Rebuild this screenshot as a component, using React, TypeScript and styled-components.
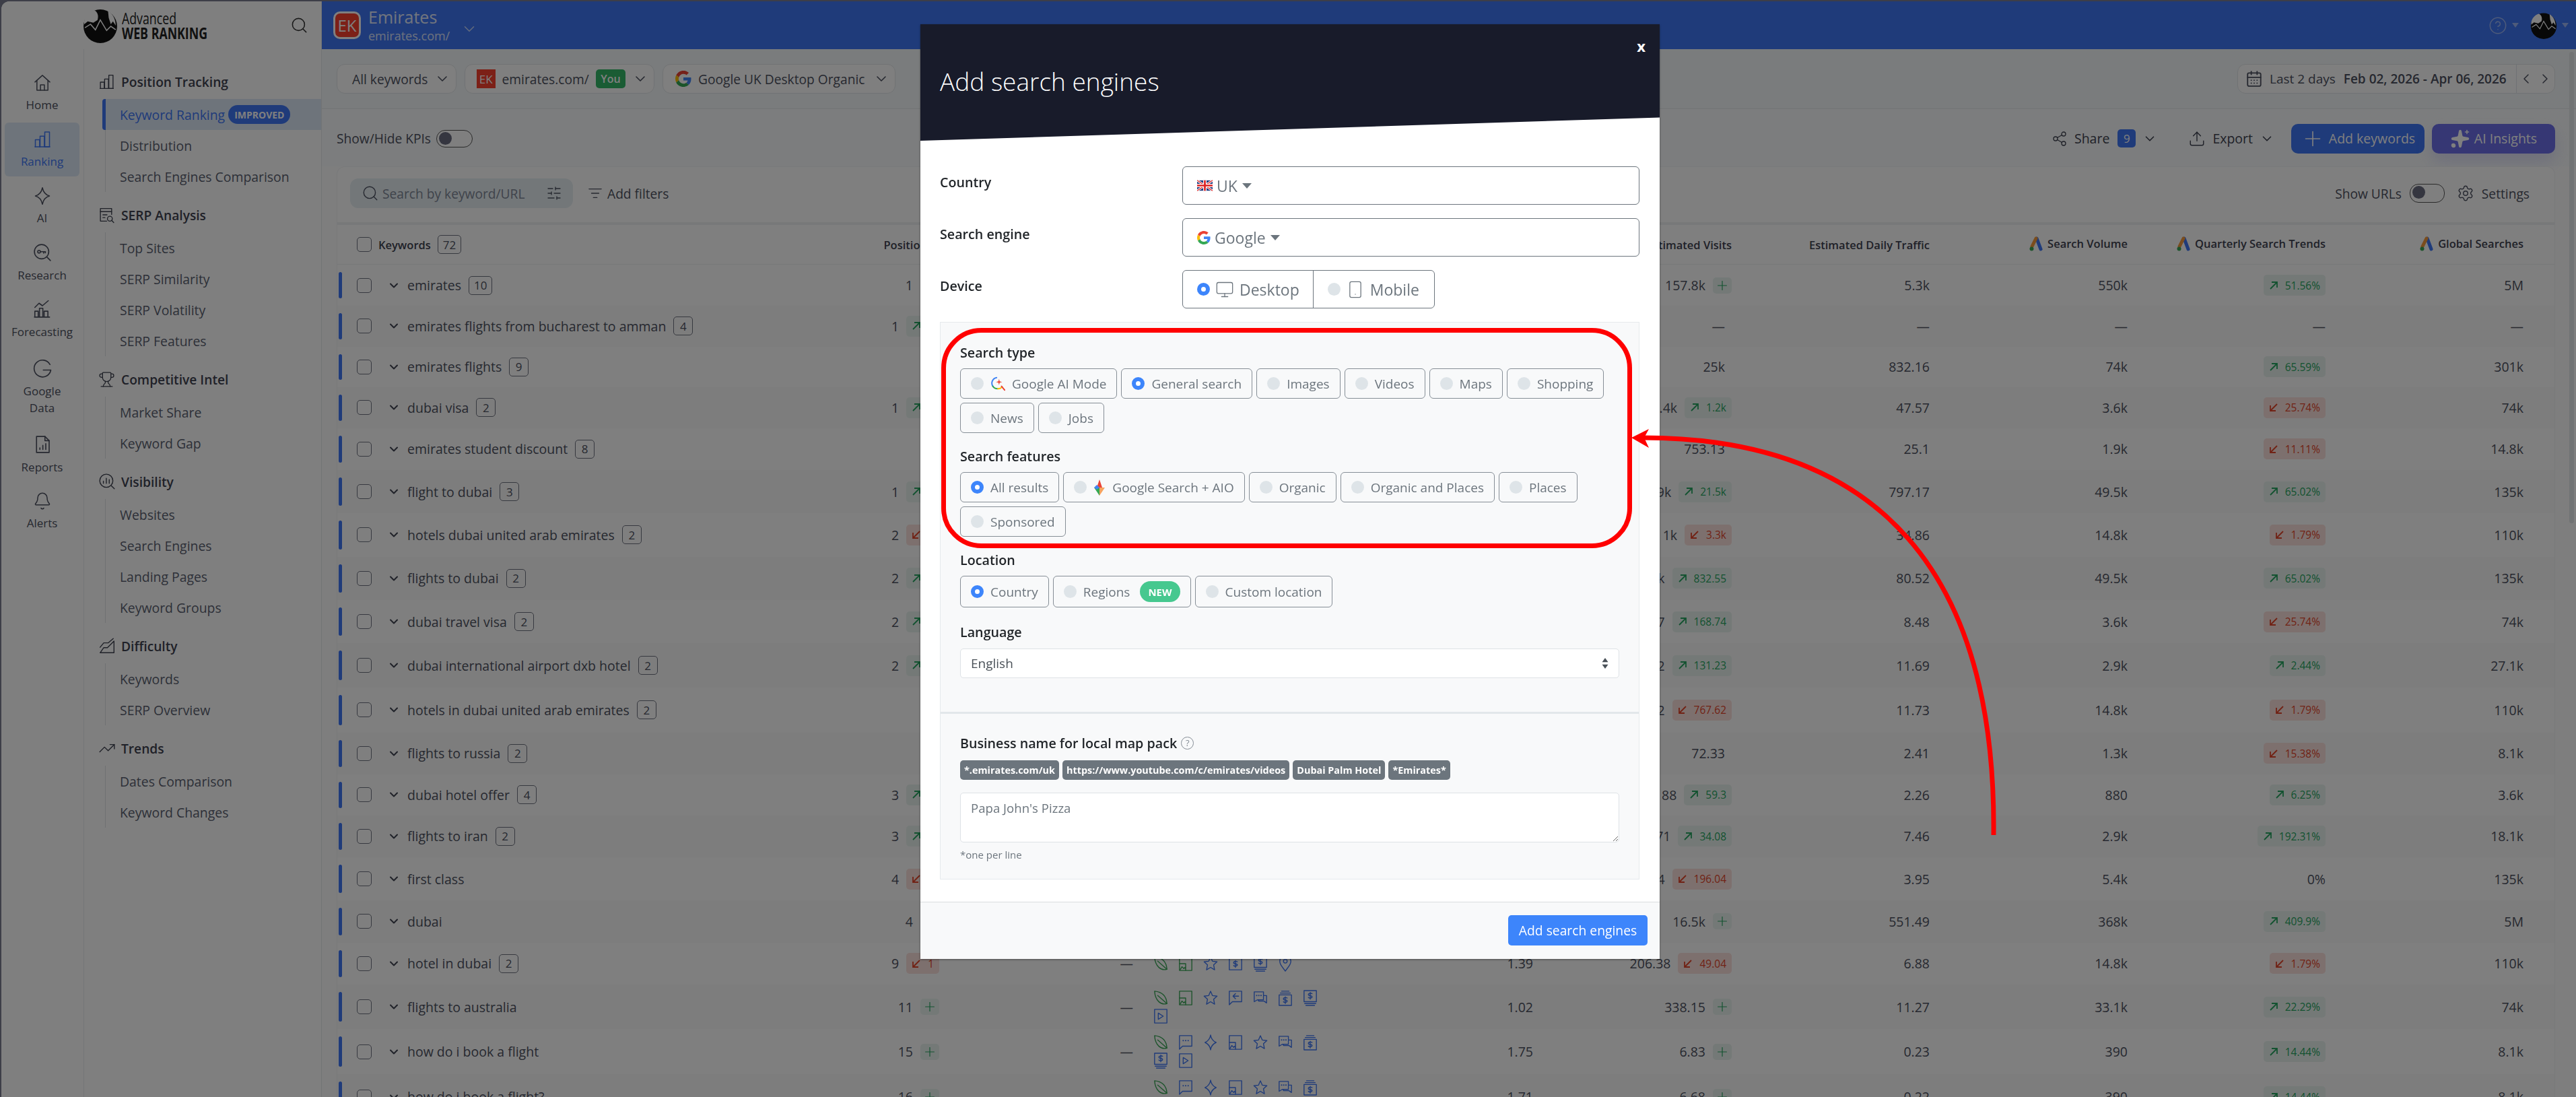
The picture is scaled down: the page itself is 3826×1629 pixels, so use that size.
import type { ReactNode } from 'react'
import styled, { createGlobalStyle } from 'styled-components'
import {
  Bell,
  CalendarDays,
  ChevronDown,
  ChevronLeft,
  ChevronRight,
  CircleHelp,
  ListFilter,
  Monitor,
  Plus,
  Search,
  Settings,
  Share2,
  SlidersHorizontal,
  Smartphone,
  Sparkles,
  TrendingUp,
  Trophy,
  Upload,
} from 'lucide-react'

const GlobalStyle = createGlobalStyle`
  html, body {
    margin: 0;
    padding: 0;
    width: 3826px;
    height: 1629px;
    overflow: hidden;
    background: #7a7d90;
  }
  * {
    box-sizing: border-box;
  }
  body {
    font-family: "Open Sans", "Noto Sans", sans-serif;
    color: #5a5f70;
  }
`

function GoogleG({ size = 24 }: { size?: number }) {
  return (
    <svg width={size} height={size} viewBox="0 0 48 48">
      <path fill="#EA4335" d="M24 9.5c3.5 0 6.7 1.2 9.2 3.6l6.9-6.9C35.9 2.4 30.5 0 24 0 14.6 0 6.5 5.4 2.6 13.2l8 6.2C12.500 13.600 17.800 9.500 24 9.500z" />
      <path fill="#4285F4" d="M47 24.500c0-1.600-.1-3.100-.4-4.500H24v9h12.900c-.6 3-2.200 5.500-4.700 7.200l7.700 6c4.500-4.200 7.100-10.300 7.100-17.700z" />
      <path fill="#FBBC05" d="M10.600 28.600c-.5-1.400-.8-3-.8-4.600s.3-3.200.8-4.600l-8-6.200C1 16.500 0 20.100 0 24s1 7.500 2.600 10.800l8-6.200z" />
      <path fill="#34A853" d="M24 48c6.500 0 11.900-2.100 15.900-5.800l-7.700-6c-2.200 1.500-5 2.300-8.200 2.300-6.200 0-11.500-4.100-13.400-9.900l-8 6.200C6.500 42.600 14.600 48 24 48z" />
    </svg>
  )
}

function AdsIcon() {
  return (
    <AdsSvg viewBox="0 0 20 22">
      <path d="M11 3l6 16" stroke="#3e76f4" strokeWidth="5" strokeLinecap="round" />
      <path d="M10 3L4 15" stroke="#f59a3c" strokeWidth="5" strokeLinecap="round" />
      <circle cx="3.500" cy="18.500" r="3" fill="#3aa757" />
    </AdsSvg>
  )
}

function Glyph({ size = 26, children }: { size?: number; children: ReactNode }) {
  return (
    <svg width={size} height={size} viewBox="0 0 24 24" fill="none" stroke="currentColor" strokeWidth="1.300" strokeLinecap="round" strokeLinejoin="round">
      {children}
    </svg>
  )
}

const HomeIcon = () => (
  <Glyph size={28}>
    <path d="M2.500 11L12 2.500 21.500 11" />
    <path d="M5 9v12.500h14V9" />
    <path d="M9.500 21.500v-7h5v7" />
  </Glyph>
)
const BarsIcon = ({ size = 28 }: { size?: number }) => (
  <Glyph size={size}>
    <path d="M3 21.500v-9h5.500v9" />
    <path d="M9 21.500V8h5.500v13.500" />
    <path d="M15 21.500V2.500h6v19z" />
    <path d="M2.500 21.500h19" />
  </Glyph>
)
const SparkIcon = ({ size = 28 }: { size?: number }) => (
  <Glyph size={size}>
    <path d="M12 1.500c1.200 6 4.500 9.300 9 10.500-4.500 1.200-7.800 4.500-9 10.500-1.200-6-4.500-9.300-9-10.500 4.500-1.200 7.800-4.500 9-10.500z" />
  </Glyph>
)
const ResearchIcon = () => (
  <Glyph size={30}>
    <circle cx="11" cy="11" r="8.500" />
    <circle cx="8" cy="11" r="1.600" />
    <path d="M9.600 11h6M13.500 11v1.800M15.500 11v1.300M17.500 17.500l4 4" />
  </Glyph>
)
const ForecastIcon = () => (
  <Glyph size={30}>
    <path d="M3 21.500v-7h4v7M8.500 21.500V11h4v10.500M14 21.500v-7h4.500v7M2.500 21.500h18" />
    <path d="M3 10l5-5 4 3 7-6" />
  </Glyph>
)
const GLetterIcon = () => (
  <Glyph size={30}>
    <path d="M21 7.500A10 10 0 1 0 22 14h-9" />
  </Glyph>
)
const ReportIcon = () => (
  <Glyph size={30}>
    <path d="M5 2.500h10l5 5v14H5z" />
    <path d="M15 2.500v5h5M9 18v-2M12.500 18v-5M16 18v-7" />
  </Glyph>
)
const SerpIcon = () => (
  <Glyph size={25}>
    <path d="M19 11V2.500H3v18h9" />
    <path d="M3 7h16M6.500 11.500h6M6.500 15.500h3" />
    <circle cx="16.500" cy="17" r="3.500" />
    <path d="M19 19.500l3 3" />
  </Glyph>
)
const VisibilityIcon = () => (
  <Glyph size={26}>
    <circle cx="11" cy="11" r="9" />
    <path d="M7 14.500v-3M11 14.500v-7M15 14.500v-5M18 18l4 4" />
  </Glyph>
)
const DifficultyIcon = () => (
  <Glyph size={26}>
    <path d="M21.500 5.500v16h-19l5-7h5z" />
    <path d="M2.500 14l5-6 6 0 7-6" />
  </Glyph>
)

function LogoGlobe({ size }: { size: number }) {
  return (
    <svg width={size} height={size} viewBox="0 0 50 50">
      <circle cx="25" cy="26" r="24" fill="#111" />
      <path d="M16 3c5 2 7 8 5 14l-6 4-8-2-5 4C1 15 6 6 16 3z" fill="#fff" />
      <path d="M36 4c7 4 11 12 11 21l-4-6-3 4-3-9z" fill="#fff" />
      <path d="M3 28l8-5 7 8 7-14 9 15 6-6 7 5" stroke="#fff" strokeWidth="1.500" fill="none" />
    </svg>
  )
}

function UkFlag() {
  return (
    <svg width="23" height="17" viewBox="0 0 60 40">
      <rect width="60" height="40" fill="#1f3a7d" />
      <path d="M0 0l60 40M60 0L0 40" stroke="#fff" strokeWidth="8" />
      <path d="M0 0l60 40M60 0L0 40" stroke="#d22" strokeWidth="3" />
      <path d="M30 0v40M0 20h60" stroke="#fff" strokeWidth="13" />
      <path d="M30 0v40M0 20h60" stroke="#d22" strokeWidth="7" />
    </svg>
  )
}

function AiModeIcon() {
  return (
    <svg width="22" height="26" viewBox="0 0 24 26" fill="none" strokeWidth="2.200" strokeLinecap="round">
      <path d="M10 3a9 9 0 0 0-6 14" stroke="#4285f4" />
      <path d="M4 17a9 9 0 0 0 8 4" stroke="#34a853" />
      <path d="M12 21a9 9 0 0 0 7-3" stroke="#fbbc05" />
      <path d="M18 17l5 6" stroke="#ea4335" />
      <path d="M14 5l1 4 4 1-4 1-1 4-1-4-4-1 4-1z" fill="#ea4335" stroke="none" />
    </svg>
  )
}

function AioIcon() {
  return (
    <svg width="18" height="26" viewBox="0 0 18 26">
      <path d="M9 1l4 12H5z" fill="#ea4335" />
      <path d="M17 13L9 25l-2-12z" fill="#f4a460" />
      <path d="M1 13l8 12V13z" fill="#34a853" />
      <path d="M5 9l4 4-4 3-4-3z" fill="#4285f4" />
    </svg>
  )
}

type FeatureName = 'leaf' | 'image' | 'imageBlue' | 'star' | 'dollar' | 'monitor' | 'pin' | 'reply' | 'chat' | 'stack' | 'play' | 'bubble' | 'spark'

function FeatureIcon({ name }: { name: FeatureName }) {
  const green = name === 'leaf' || name === 'image'
  return (
    <FeatureSvg $green={green} viewBox="0 0 24 26" fill="none" stroke="currentColor" strokeWidth="1.500" strokeLinejoin="round" strokeLinecap="round">
      {name === 'leaf' && (
        <>
          <path d="M2 2c11 1 19 6 20 20-9 3-19-4-20-20z" />
          <path d="M7 9c5 4 10 9 15 13" />
        </>
      )}
      {(name === 'image' || name === 'imageBlue') && (
        <>
          <rect x="2" y="2" width="20" height="22" />
          <path d="M2 13h10v11M3 23l3-5 3 3 2-2 1 3" />
        </>
      )}
      {name === 'star' && <path d="M12 2l3 7 7.500 1-5.500 5 1.500 8-6.500-4-6.500 4L7 15 1.500 10 9 9z" />}
      {name === 'dollar' && (
        <>
          <rect x="2" y="4" width="20" height="19" />
          <path d="M12 8v11M15 10c-1-1-6-1-6 1.500s6 1 6 3.500-5 2.500-6 1" />
        </>
      )}
      {name === 'monitor' && (
        <>
          <rect x="2" y="1" width="20" height="18" />
          <path d="M12 4v11M15 6c-1-1-6-1-6 1.500s6 1 6 3.500-5 2.500-6 1M3 22h18M5 25h14" />
        </>
      )}
      {name === 'stack' && (
        <>
          <rect x="2" y="8" width="20" height="17" />
          <path d="M12 11v11M15 13c-1-1-6-1-6 1.500s6 1 6 3.500-5 2.500-6 1M4 5h16M6 2h12" />
        </>
      )}
      {name === 'pin' && (
        <>
          <path d="M12 25C5 16 3 13 3 9a9 9 0 0 1 18 0c0 4-2 7-9 16z" />
          <circle cx="12" cy="9" r="3" />
        </>
      )}
      {name === 'reply' && (
        <>
          <path d="M2 2h20v17H7l-5 5z" />
          <path d="M17 10H9M12 6l-4 4 4 4" />
        </>
      )}
      {name === 'chat' && (
        <>
          <path d="M2 3h15v13H7l-5 3z" />
          <path d="M17 9h5v12l-4-3H9v-2" />
          <path d="M6 9h.1M9.500 9h.1M13 9h.1" strokeWidth="2.200" />
        </>
      )}
      {name === 'bubble' && (
        <>
          <path d="M2 2h20v17H7l-5 5z" />
          <path d="M8 10h.1M12 10h.1M16 10h.1" strokeWidth="2.200" />
        </>
      )}
      {name === 'play' && (
        <>
          <rect x="2" y="2" width="20" height="22" />
          <path d="M8 8l8 5-8 5z" />
        </>
      )}
      {name === 'spark' && <path d="M12 1c1 7 4.500 10 9 12-4.500 2-8 5-9 12-1-7-4.500-10-9-12 4.500-2 8-5 9-12z" />}
    </FeatureSvg>
  )
}

const railItems = [
  { label: 'Home', icon: <HomeIcon /> },
  { label: 'Ranking', icon: <BarsIcon />, active: true },
  { label: 'AI', icon: <SparkIcon /> },
  { label: 'Research', icon: <ResearchIcon /> },
  { label: 'Forecasting', icon: <ForecastIcon /> },
  { label: 'Google Data', icon: <GLetterIcon />, tall: true },
  { label: 'Reports', icon: <ReportIcon /> },
  { label: 'Alerts', icon: <Bell size={28} strokeWidth={1.300} /> },
]

const navGroups = [
  { title: 'Position Tracking', icon: <BarsIcon size={25} />, items: ['Keyword Ranking', 'Distribution', 'Search Engines Comparison'] },
  { title: 'SERP Analysis', icon: <SerpIcon />, items: ['Top Sites', 'SERP Similarity', 'SERP Volatility', 'SERP Features'] },
  { title: 'Competitive Intel', icon: <Trophy size={25} strokeWidth={1.300} />, items: ['Market Share', 'Keyword Gap'] },
  { title: 'Visibility', icon: <VisibilityIcon />, items: ['Websites', 'Search Engines', 'Landing Pages', 'Keyword Groups'] },
  { title: 'Difficulty', icon: <DifficultyIcon />, items: ['Keywords', 'SERP Overview'] },
  { title: 'Trends', icon: <TrendingUp size={26} strokeWidth={1.300} />, items: ['Dates Comparison', 'Keyword Changes'] },
]

type Delta = { dir: 'up' | 'down' | 'new'; text?: string } | null

type KeywordRow = {
  h: number
  name: string
  count?: number
  pos?: string
  posDelta?: Delta
  features?: FeatureName[]
  cpc?: string
  visits: string
  visitsDelta?: Delta
  traffic: string
  volume: string
  trend: Delta | string
  global: string
}

const up = (text?: string): Delta => ({ dir: 'up', text })
const down = (text?: string): Delta => ({ dir: 'down', text })
const added: Delta = { dir: 'new' }

const rows: KeywordRow[] = [
  { h: 61, name: 'emirates', count: 10, pos: '1', posDelta: added, visits: '157.8k', visitsDelta: added, traffic: '5.3k', volume: '550k', trend: up('51.56%'), global: '5M' },
  { h: 60.5, name: 'emirates flights from bucharest to amman', count: 4, pos: '1', posDelta: up('1'), visits: '—', traffic: '—', volume: '—', trend: '—', global: '—' },
  { h: 60.5, name: 'emirates flights', count: 9, visits: '25k', traffic: '832.16', volume: '74k', trend: up('65.59%'), global: '301k' },
  { h: 60.5, name: 'dubai visa', count: 2, pos: '1', posDelta: up('1'), visits: '2.4k', visitsDelta: up('1.2k'), traffic: '47.57', volume: '3.6k', trend: down('25.74%'), global: '74k' },
  { h: 62.5, name: 'emirates student discount', count: 8, visits: '753.13', traffic: '25.1', volume: '1.9k', trend: down('11.11%'), global: '14.8k' },
  { h: 64, name: 'flight to dubai', count: 3, pos: '1', posDelta: up('1'), visits: '29k', visitsDelta: up('21.5k'), traffic: '797.17', volume: '49.5k', trend: up('65.02%'), global: '135k' },
  { h: 64.5, name: 'hotels dubai united arab emirates', count: 2, pos: '2', posDelta: down('1'), visits: '1k', visitsDelta: down('3.3k'), traffic: '34.86', volume: '14.8k', trend: down('1.79%'), global: '110k' },
  { h: 64.5, name: 'flights to dubai', count: 2, pos: '2', posDelta: up('1'), visits: '1.2k', visitsDelta: up('832.55'), traffic: '80.52', volume: '49.5k', trend: up('65.02%'), global: '135k' },
  { h: 64, name: 'dubai travel visa', count: 2, pos: '2', posDelta: up('1'), visits: '217', visitsDelta: up('168.74'), traffic: '8.48', volume: '3.6k', trend: down('25.74%'), global: '74k' },
  { h: 66, name: 'dubai international airport dxb hotel', count: 2, pos: '2', posDelta: up('1'), visits: '292', visitsDelta: up('131.23'), traffic: '11.69', volume: '2.9k', trend: up('2.44%'), global: '27.1k' },
  { h: 66.5, name: 'hotels in dubai united arab emirates', count: 2, visits: '292', visitsDelta: down('767.62'), traffic: '11.73', volume: '14.8k', trend: down('1.79%'), global: '110k' },
  { h: 62.5, name: 'flights to russia', count: 2, visits: '72.33', traffic: '2.41', volume: '1.3k', trend: down('15.38%'), global: '8.1k' },
  { h: 60.5, name: 'dubai hotel offer', count: 4, pos: '3', posDelta: up('1'), visits: '88', visitsDelta: up('59.3'), traffic: '2.26', volume: '880', trend: up('6.25%'), global: '3.6k' },
  { h: 62.5, name: 'flights to iran', count: 2, pos: '3', posDelta: up('1'), visits: '171', visitsDelta: up('34.08'), traffic: '7.46', volume: '2.9k', trend: up('192.31%'), global: '18.1k' },
  { h: 64, name: 'first class', pos: '4', posDelta: down('1'), visits: '94', visitsDelta: down('196.04'), traffic: '3.95', volume: '5.4k', trend: '0%', global: '135k' },
  { h: 62.5, name: 'dubai', pos: '4', posDelta: added, visits: '16.5k', visitsDelta: added, traffic: '551.49', volume: '368k', trend: up('409.9%'), global: '5M' },
  { h: 62.5, name: 'hotel in dubai', count: 2, pos: '9', posDelta: down('1'), features: ['leaf', 'image', 'star', 'dollar', 'monitor', 'pin'], cpc: '1.39', visits: '206.38', visitsDelta: down('49.04'), traffic: '6.88', volume: '14.8k', trend: down('1.79%'), global: '110k' },
  { h: 66, name: 'flights to australia', pos: '11', posDelta: added, features: ['leaf', 'image', 'star', 'reply', 'chat', 'stack', 'monitor', 'play'], cpc: '1.02', visits: '338.15', visitsDelta: added, traffic: '11.27', volume: '33.1k', trend: up('22.29%'), global: '74k' },
  { h: 67, name: 'how do i book a flight', pos: '15', posDelta: added, features: ['leaf', 'bubble', 'spark', 'imageBlue', 'star', 'chat', 'stack', 'monitor', 'play'], cpc: '1.75', visits: '6.83', visitsDelta: added, traffic: '0.23', volume: '390', trend: up('14.44%'), global: '8.1k' },
  { h: 67, name: 'how do i book a flight?', pos: '16', posDelta: added, features: ['leaf', 'bubble', 'spark', 'imageBlue', 'star', 'chat', 'stack', 'monitor', 'play'], cpc: '1.71', visits: '6.68', visitsDelta: added, traffic: '0.22', volume: '390', trend: up('14.44%'), global: '8.1k' },
]

function DeltaBadge({ delta }: { delta: NonNullable<Delta> }) {
  if (delta.dir === 'new') {
    return (
      <PlusBadge>
        <Plus size={22} strokeWidth={1.300} />
      </PlusBadge>
    )
  }
  return (
    <Badge $down={delta.dir === 'down'}>
      <svg width="14" height="14" viewBox="0 0 14 14" fill="none" stroke="currentColor" strokeWidth="1.800">
        {delta.dir === 'up' ? <path d="M2 12L12 2M4 2h8v8" /> : <path d="M12 2L2 12M2 4v8h8" />}
      </svg>
      {delta.text}
    </Badge>
  )
}

function Chip({ label, selected, icon, children }: { label: string; selected?: boolean; icon?: ReactNode; children?: ReactNode }) {
  return (
    <ChipBox>
      <Radio $on={selected} />
      {icon}
      <span>{label}</span>
      {children}
    </ChipBox>
  )
}

export default function App() {
  return (
    <>
      <GlobalStyle />
      <Shell>
        <Sidebar>
          <LogoBar>
            <LogoGlobe size={52} />
            <LogoText>
              <LogoTop>Advanced</LogoTop>
              <LogoBottom>WEB RANKING</LogoBottom>
            </LogoText>
            <LogoSearch>
              <Search size={27} strokeWidth={1.400} />
            </LogoSearch>
          </LogoBar>
          <SideBody>
            <Rail>
              {railItems.map((item) => (
                <RailItem key={item.label} $active={item.active} $tall={item.tall}>
                  {item.icon}
                  <RailLabel>{item.label}</RailLabel>
                </RailItem>
              ))}
            </Rail>
            <NavPanel>
              {navGroups.map((group) => (
                <NavGroup key={group.title}>
                  <NavHeading>
                    <NavIcon>{group.icon}</NavIcon>
                    {group.title}
                  </NavHeading>
                  <NavList>
                    {group.items.map((item) =>
                      item === 'Keyword Ranking' ? (
                        <NavItem key={item} $active>
                          {item}
                          <Improved>IMPROVED</Improved>
                        </NavItem>
                      ) : (
                        <NavItem key={item}>{item}</NavItem>
                      ),
                    )}
                  </NavList>
                </NavGroup>
              ))}
            </NavPanel>
          </SideBody>
        </Sidebar>

        <Main>
          <TopBar>
            <EkLogo>EK</EkLogo>
            <Project>
              <ProjectName>Emirates</ProjectName>
              <ProjectUrl>emirates.com/</ProjectUrl>
            </Project>
            <ProjectChevron>
              <ChevronDown size={26} strokeWidth={1.400} />
            </ProjectChevron>
            <TopRight>
              <CircleHelp size={28} strokeWidth={1.300} />
              <Caret />
              <Avatar>
                <LogoGlobe size={40} />
              </Avatar>
              <Caret />
            </TopRight>
          </TopBar>

          <Toolbar>
            <Pill $w={178}>
              All keywords
              <PillChevron>
                <ChevronDown size={24} strokeWidth={1.600} />
              </PillChevron>
            </Pill>
            <Pill $w={282} $inset={17}>
              <EkSquare>EK</EkSquare>
              emirates.com/
              <YouTag>You</YouTag>
              <PillChevron>
                <ChevronDown size={24} strokeWidth={1.600} />
              </PillChevron>
            </Pill>
            <Pill $w={346} $inset={18}>
              <GoogleG size={24} />
              Google UK Desktop Organic
              <PillChevron>
                <ChevronDown size={24} strokeWidth={1.600} />
              </PillChevron>
            </Pill>
            <DatePicker>
              <CalendarDays size={26} strokeWidth={1.700} />
              <DateLabel>Last 2 days</DateLabel>
              <DateRange>Feb 02, 2026 - Apr 06, 2026</DateRange>
              <DateArrows>
                <ChevronLeft size={24} strokeWidth={1.500} />
                <ChevronRight size={24} strokeWidth={1.500} />
              </DateArrows>
            </DatePicker>
          </Toolbar>

          <KpiRow>
            <ToggleLabel>Show/Hide KPIs</ToggleLabel>
            <Toggle />
            <KpiActions>
              <ActionLink $gap={46}>
                <Share2 size={24} strokeWidth={1.300} />
                Share
                <ShareCount>9</ShareCount>
                <ChevronDown size={22} strokeWidth={1.800} />
              </ActionLink>
              <ActionLink $gap={25}>
                <Upload size={26} strokeWidth={1.300} />
                Export
                <ChevronDown size={22} strokeWidth={1.800} />
              </ActionLink>
              <BlueButton>
                <Plus size={36} strokeWidth={1.100} />
                Add keywords
              </BlueButton>
              <PurpleButton>
                <Sparkles size={30} strokeWidth={1.200} fill="currentColor" />
                AI Insights
              </PurpleButton>
            </KpiActions>
          </KpiRow>

          <Card>
            <FilterRow>
              <SearchBox>
                <Search size={26} strokeWidth={1.300} />
                <SearchHint>Search by keyword/URL</SearchHint>
                <SlidersHorizontal size={24} strokeWidth={1.300} />
              </SearchBox>
              <AddFilters>
                <ListFilter size={22} strokeWidth={1.400} />
                Add filters
              </AddFilters>
              <FilterRight>
                <ToggleLabel>Show URLs</ToggleLabel>
                <SmallToggle />
                <SettingsLink>
                  <Settings size={26} strokeWidth={1.300} />
                  Settings
                </SettingsLink>
              </FilterRight>
            </FilterRow>

            <HeadRow>
              <HeadKeyword>
                <CheckBox />
                Keywords
                <CountPill>72</CountPill>
              </HeadKeyword>
              <HeadCell $inset={10}>Positions</HeadCell>
              <HeadCell />
              <HeadCell />
              <HeadCell />
              <HeadCell>Estimated Visits</HeadCell>
              <HeadCell>Estimated Daily Traffic</HeadCell>
              <HeadCell $raised>
                <AdsIcon />
                Search Volume
              </HeadCell>
              <HeadCell $raised>
                <AdsIcon />
                Quarterly Search Trends
              </HeadCell>
              <HeadCell $raised>
                <AdsIcon />
                Global Searches
              </HeadCell>
            </HeadRow>

            {rows.map((row) => (
              <Row key={row.name} $h={row.h}>
                <KeywordCell>
                  <Marker />
                  <CheckBox />
                  <RowChevron>
                    <ChevronDown size={20} strokeWidth={2.400} />
                  </RowChevron>
                  <KeywordName>{row.name}</KeywordName>
                  {row.count !== undefined && <CountPill>{row.count}</CountPill>}
                </KeywordCell>
                <ValueCell>
                  {row.pos}
                  {row.posDelta && <DeltaBadge delta={row.posDelta} />}
                </ValueCell>
                <ValueCell>{row.cpc && '—'}</ValueCell>
                <FeatureCell>
                  {row.features?.map((name, i) => (
                    <FeatureIcon key={i} name={name} />
                  ))}
                </FeatureCell>
                <ValueCell>{row.cpc}</ValueCell>
                <ValueCell $inset={!row.visitsDelta}>
                  {row.visits}
                  {row.visitsDelta && <DeltaBadge delta={row.visitsDelta} />}
                </ValueCell>
                <ValueCell>{row.traffic}</ValueCell>
                <ValueCell>{row.volume}</ValueCell>
                <ValueCell>{typeof row.trend === 'string' ? row.trend : row.trend && <DeltaBadge delta={row.trend} />}</ValueCell>
                <ValueCell>{row.global}</ValueCell>
              </Row>
            ))}
          </Card>
          <ScrollThumb />
        </Main>
      </Shell>

      <Overlay>
        <Modal>
          <ModalHead>
            <CloseMark>x</CloseMark>
            <ModalTitle>Add search engines</ModalTitle>
          </ModalHead>
          <ModalBody>
            <FormRow>
              <FormLabel>Country</FormLabel>
              <SelectBox>
                <UkFlag />
                UK
                <DownCaret />
              </SelectBox>
            </FormRow>
            <FormRow>
              <FormLabel>Search engine</FormLabel>
              <SelectBox>
                <GoogleG size={20} />
                Google
                <DownCaret />
              </SelectBox>
            </FormRow>
            <FormRow>
              <FormLabel>Device</FormLabel>
              <Segmented>
                <Segment>
                  <Radio $on />
                  <Monitor size={28} strokeWidth={1.100} />
                  Desktop
                </Segment>
                <Segment>
                  <Radio />
                  <Smartphone size={28} strokeWidth={1.100} />
                  Mobile
                </Segment>
              </Segmented>
            </FormRow>

            <Panel>
              <PanelTop>
                <PanelLabel>Search type</PanelLabel>
                <ChipWrap>
                  <Chip label="Google AI Mode" icon={<AiModeIcon />} />
                  <Chip label="General search" selected />
                  <Chip label="Images" />
                  <Chip label="Videos" />
                  <Chip label="Maps" />
                  <Chip label="Shopping" />
                  <Chip label="News" />
                  <Chip label="Jobs" />
                </ChipWrap>
                <PanelLabel>Search features</PanelLabel>
                <ChipWrap>
                  <Chip label="All results" selected />
                  <Chip label="Google Search + AIO" icon={<AioIcon />} />
                  <Chip label="Organic" />
                  <Chip label="Organic and Places" />
                  <Chip label="Places" />
                  <Chip label="Sponsored" />
                </ChipWrap>
                <PanelLabel>Location</PanelLabel>
                <LocationWrap>
                  <Chip label="Country" selected />
                  <Chip label="Regions">
                    <NewTag>NEW</NewTag>
                  </Chip>
                  <Chip label="Custom location" />
                </LocationWrap>
                <LanguageLabel>Language</LanguageLabel>
                <LanguageSelect>
                  English
                  <UpDown viewBox="0 0 12 20">
                    <path d="M6 1l5 7H1zM6 19l5-7H1z" />
                  </UpDown>
                </LanguageSelect>
              </PanelTop>
              <PanelBottom>
                <BusinessLabel>
                  Business name for local map pack
                  <HelpDot>?</HelpDot>
                </BusinessLabel>
                <TagRow>
                  <Tag>*.emirates.com/uk</Tag>
                  <Tag>https://www.youtube.com/c/emirates/videos</Tag>
                  <Tag>Dubai Palm Hotel</Tag>
                  <Tag>*Emirates*</Tag>
                </TagRow>
                <TextArea readOnly placeholder="Papa John's Pizza" />
                <Hint>*one per line</Hint>
              </PanelBottom>
            </Panel>
          </ModalBody>
          <ModalFoot>
            <SubmitButton>Add search engines</SubmitButton>
          </ModalFoot>
        </Modal>
        <Annotation viewBox="0 0 3826 1629">
          <rect x="1401.500" y="490.500" width="1019" height="320" rx="56" fill="none" stroke="#ff0000" strokeWidth="7" />
          <path d="M2961 1240C2965 850 2790 650 2440 650" fill="none" stroke="#ff0000" strokeWidth="7" />
          <path d="M2423 650L2449 637L2442 650L2449 665z" fill="#ff0000" />
        </Annotation>
      </Overlay>
    </>
  )
}

const GRID = '770px 124px 288px 293px 301px 295px 294px 294px 294px 294px 46px'

const Shell = styled.div`
  position: relative;
  display: flex;
  width: 3824px;
  height: 1627px;
  margin: 2px 0 0 2px;
  background: #fff;
  border-top-left-radius: 12px;
  overflow: hidden;
`

const Sidebar = styled.aside`
  flex: 0 0 476px;
  display: flex;
  flex-direction: column;
  background: #fff;
  border-right: 1px solid #e4e8ea;
`

const LogoBar = styled.div`
  height: 71px;
  display: flex;
  align-items: center;
  padding-left: 121px;
`

const LogoText = styled.div`
  display: flex;
  flex-direction: column;
  margin-left: 6px;
  color: #222;
  transform: scaleX(0.74);
  transform-origin: left center;
`

const LogoTop = styled.span`
  font-size: 24px;
  line-height: 22px;
`

const LogoBottom = styled.span`
  font-size: 24px;
  line-height: 22px;
  font-weight: 700;
  white-space: nowrap;
`

const LogoSearch = styled.div`
  margin-left: auto;
  margin-right: 19px;
  display: flex;
  color: #333;
`

const SideBody = styled.div`
  flex: 1;
  display: flex;
  min-height: 0;
`

const Rail = styled.nav`
  flex: 0 0 123px;
  padding: 25px 6px 0 5px;
  border-right: 1.5px solid #e8ebee;
  display: flex;
  flex-direction: column;
  align-items: stretch;
  gap: 4px;
`

const RailItem = styled.div<{ $active?: boolean; $tall?: boolean }>`
  flex: none;
  height: ${({ $tall }) => ($tall ? '113px' : '80px')};
  display: flex;
  flex-direction: column;
  align-items: center;
  justify-content: center;
  gap: 6px;
  border-radius: 6px;
  color: ${({ $active }) => ($active ? '#3e76f4' : '#4d5160')};
  background: ${({ $active }) => ($active ? '#dde9f7' : 'transparent')};
  text-align: center;
`

const RailLabel = styled.span`
  font-size: 17px;
  line-height: 25px;
  max-width: 92px;
`

const NavPanel = styled.nav`
  flex: 1;
  min-width: 0;
  padding-top: 33px;
`

const NavGroup = styled.section`
  margin-bottom: 19px;
`

const NavHeading = styled.h3`
  margin: 0 0 11px 21px;
  height: 30px;
  display: flex;
  align-items: center;
  font-size: 19.2px;
  font-weight: 600;
  color: #3e4250;
`

const NavIcon = styled.span`
  width: 34px;
  display: flex;
`

const NavList = styled.ul`
  list-style: none;
  margin: 0 0 0 31px;
  padding: 0;
  border-left: 1.5px solid #dfe3e6;
`

const NavItem = styled.li<{ $active?: boolean }>`
  height: 46px;
  display: flex;
  align-items: center;
  padding-left: 21px;
  margin-left: ${({ $active }) => ($active ? '-5px' : '0')};
  font-size: 19.4px;
  color: ${({ $active }) => ($active ? '#3e76f4' : '#5a5f70')};
  background: ${({ $active }) => ($active ? '#dde9f7' : 'transparent')};
  border-left: ${({ $active }) => ($active ? '5px solid #3e76f4' : '0')};
  border-radius: ${({ $active }) => ($active ? '4px 0 0 4px' : '0')};
`

const Improved = styled.span`
  margin-left: 5px;
  height: 28px;
  padding: 0 9px;
  display: flex;
  align-items: center;
  border-radius: 14px;
  background: #3e76f4;
  color: #fff;
  font-size: 14px;
  font-weight: 700;
`

const Main = styled.main`
  position: relative;
  flex: 1;
  min-width: 0;
  display: flex;
  flex-direction: column;
  background: #fdfdfd;
`

const TopBar = styled.header`
  flex: 0 0 71px;
  display: flex;
  align-items: center;
  padding: 0 11px 0 17px;
  background: #3e76f4;
  color: #fff;
`

const EkLogo = styled.div`
  width: 41px;
  height: 41px;
  display: flex;
  align-items: center;
  justify-content: center;
  border: 3px solid #fff;
  border-radius: 10px;
  background: #f8402e;
  font-size: 24px;
`

const Project = styled.div`
  margin-left: 11px;
  display: flex;
  flex-direction: column;
`

const ProjectName = styled.span`
  font-size: 25px;
  line-height: 30px;
  opacity: 0.85;
`

const ProjectUrl = styled.span`
  font-size: 18px;
  line-height: 26px;
  opacity: 0.8;
`

const ProjectChevron = styled.div`
  margin-left: 16px;
  display: flex;
  margin-top: 10px;
  opacity: 0.7;
`

const TopRight = styled.div`
  margin-left: auto;
  display: flex;
  align-items: center;
  gap: 7px;
  color: #9db6f5;
`

const Caret = styled.span`
  width: 0;
  height: 0;
  border-left: 5px solid transparent;
  border-right: 5px solid transparent;
  border-top: 7px solid #9db6f5;
`

const Avatar = styled.div`
  width: 40px;
  height: 40px;
  margin-left: 10px;
  border-radius: 50%;
  overflow: hidden;
  display: flex;
`

const Toolbar = styled.div`
  flex: 0 0 89px;
  display: flex;
  align-items: center;
  gap: 12px;
  padding: 0 31px 0 22px;
  background: #f4f8fa;
  border-bottom: 1.5px solid #e4e8ea;
`

const Pill = styled.div<{ $w: number; $inset?: number }>`
  width: ${({ $w }) => $w}px;
  height: 44px;
  display: flex;
  align-items: center;
  gap: 10px;
  padding: 0 8px 0 ${({ $inset }) => $inset ?? 22}px;
  border: 1.5px solid #e1e5e8;
  border-radius: 12px;
  background: #fff;
  font-size: 19.2px;
  color: #4d5160;
  white-space: nowrap;
`

const PillChevron = styled.span`
  display: flex;
  margin-left: auto;
`

const EkSquare = styled.span`
  width: 28px;
  height: 28px;
  display: flex;
  align-items: center;
  justify-content: center;
  background: #f8402e;
  color: #fff;
  font-size: 17px;
`

const YouTag = styled.span`
  width: 45px;
  height: 28px;
  display: flex;
  align-items: center;
  justify-content: center;
  border-radius: 5px;
  background: #34b869;
  color: #fff;
  font-size: 16px;
  font-weight: 600;
`

const DatePicker = styled.div`
  margin-left: auto;
  width: 472px;
  height: 44px;
  display: flex;
  align-items: center;
  padding-left: 11px;
  border: 1.5px solid #e1e5e8;
  border-radius: 12px;
  background: #fff;
  font-size: 19px;
  color: #4d5160;
`

const DateLabel = styled.span`
  margin-left: 10px;
  white-space: nowrap;
`

const DateRange = styled.span`
  margin-left: 12px;
  font-weight: 600;
  white-space: nowrap;
`

const DateArrows = styled.div`
  margin-left: auto;
  align-self: stretch;
  width: 57px;
  display: flex;
  align-items: center;
  justify-content: center;
  gap: 4px;
  border-left: 1.5px solid #e1e5e8;
`

const KpiRow = styled.div`
  flex: 0 0 85px;
  display: flex;
  align-items: center;
  padding: 2px 31px 0 22px;
  background: #f9fbfc;
`

const ToggleLabel = styled.span`
  font-size: 19.2px;
  color: #4d5160;
  white-space: nowrap;
`

const Toggle = styled.span`
  position: relative;
  width: 54px;
  height: 26px;
  margin-left: 8px;
  border: 1.5px solid #555;
  border-radius: 13px;
  background: #fff;

  &::after {
    content: '';
    position: absolute;
    left: 3px;
    top: 2px;
    width: 19px;
    height: 19px;
    border-radius: 50%;
    background: #6a6d80;
  }
`

const SmallToggle = styled(Toggle)`
  width: 52px;
  height: 28px;
  margin-left: 12px;
`

const KpiActions = styled.div`
  margin-left: auto;
  display: flex;
  align-items: center;
`

const ActionLink = styled.div<{ $gap: number }>`
  display: flex;
  align-items: center;
  gap: 10px;
  margin-right: ${({ $gap }) => $gap}px;
  font-size: 19.5px;
  color: #3e4250;
`

const ShareCount = styled.span`
  width: 27px;
  height: 27px;
  margin-left: 2px;
  display: flex;
  align-items: center;
  justify-content: center;
  border-radius: 5px;
  background: #3e76f4;
  color: #fff;
  font-size: 17px;
`

const BlueButton = styled.button`
  width: 198px;
  height: 44px;
  display: flex;
  align-items: center;
  justify-content: center;
  gap: 6px;
  border: 0;
  border-radius: 10px;
  background: #3e76f4;
  color: #fff;
  font: inherit;
  font-size: 19.5px;
  white-space: nowrap;
`

const PurpleButton = styled(BlueButton)`
  width: 183px;
  margin-left: 11px;
  background: #6c6fe8;
  box-shadow: 0 12px 24px rgba(108, 111, 232, 0.2);
`

const Card = styled.section`
  flex: 1;
  margin: 0 31px 0 22px;
  background: #fff;
  border: 1px solid #f0f2f4;
  border-bottom: 0;
  border-radius: 12px 12px 0 0;
  overflow: hidden;
`

const FilterRow = styled.div`
  height: 86px;
  display: flex;
  align-items: center;
  padding: 0 37px 4px 19px;
  border-bottom: 4px solid #eef1f3;
`

const SearchBox = styled.div`
  width: 331px;
  height: 44px;
  display: flex;
  align-items: center;
  gap: 5px;
  padding: 0 16px 0 17px;
  border-radius: 12px;
  background: #e6eff3;
  color: #4d5160;
`

const SearchHint = styled.span`
  flex: 1;
  font-size: 19.2px;
  color: #7e8696;
  white-space: nowrap;
`

const AddFilters = styled.div`
  margin-left: 22px;
  display: flex;
  align-items: center;
  gap: 7px;
  font-size: 19.2px;
  color: #4d5160;
`

const FilterRight = styled.div`
  margin-left: auto;
  display: flex;
  align-items: center;
`

const SettingsLink = styled.div`
  margin-left: 18px;
  display: flex;
  align-items: center;
  gap: 11px;
  font-size: 19.2px;
  color: #4d5160;
`

const HeadRow = styled.div`
  height: 59px;
  display: grid;
  grid-template-columns: ${GRID};
  align-items: center;
  border-bottom: 1px solid #eef0f2;
  font-size: 16.5px;
  font-weight: 600;
  color: #3e4250;
`

const HeadKeyword = styled.div`
  display: flex;
  align-items: center;
  gap: 10px;
  padding-left: 29px;
`

const HeadCell = styled.div<{ $raised?: boolean; $inset?: number }>`
  display: flex;
  align-items: center;
  justify-content: flex-end;
  gap: 7px;
  white-space: nowrap;
  padding-right: ${({ $inset }) => $inset ?? 0}px;
  margin-top: ${({ $raised }) => ($raised ? '-3px' : '0')};
`

const AdsSvg = styled.svg`
  width: 20px;
  height: 22px;
`

const CheckBox = styled.span`
  flex: none;
  width: 22px;
  height: 22px;
  border: 1.5px solid #6f7380;
  border-radius: 5px;
  background: #fff;
`

const CountPill = styled.span`
  min-width: 29px;
  height: 28px;
  padding: 0 7px;
  display: flex;
  align-items: center;
  justify-content: center;
  border: 1.5px solid #6f7380;
  border-radius: 5px;
  font-size: 17px;
  font-weight: 400;
  color: #4d5160;
`

const Row = styled.div<{ $h: number }>`
  height: ${({ $h }) => $h}px;
  display: grid;
  grid-template-columns: ${GRID};
  align-items: center;
  font-size: 19.5px;
  color: #4d5160;

  &:nth-of-type(even) {
    background: #fafafa;
  }
`

const KeywordCell = styled.div`
  align-self: stretch;
  display: flex;
  align-items: center;
`

const Marker = styled.span`
  align-self: stretch;
  flex: none;
  width: 5px;
  margin: 11px 22px 11px 2px;
  border-radius: 3px;
  background: #3e76f4;
`

const RowChevron = styled.span`
  display: flex;
  margin: 0 10px 0 23px;
  color: #3e4250;
`

const KeywordName = styled.span`
  margin-right: 11px;
  white-space: nowrap;
`

const ValueCell = styled.div<{ $inset?: boolean }>`
  display: flex;
  align-items: center;
  justify-content: flex-end;
  gap: 11px;
  padding-right: ${({ $inset }) => ($inset ? '10px' : '0')};
  white-space: nowrap;
`

const FeatureCell = styled.div`
  display: flex;
  flex-wrap: wrap;
  gap: 3px 15px;
  padding-left: 30px;
`

const FeatureSvg = styled.svg<{ $green?: boolean }>`
  width: 22px;
  height: 24px;
  color: ${({ $green }) => ($green ? '#3aa757' : '#3e76f4')};
`

const Badge = styled.span<{ $down?: boolean }>`
  height: 31px;
  display: flex;
  align-items: center;
  gap: 10px;
  padding: 0 8px;
  border-radius: 5px;
  font-size: 15.5px;
  font-weight: 500;
  color: ${({ $down }) => ($down ? '#e2452a' : '#26a560')};
  background: ${({ $down }) => ($down ? '#fbe0dc' : '#e9f3ef')};
`

const PlusBadge = styled.span`
  width: 28px;
  height: 24px;
  display: flex;
  align-items: center;
  justify-content: center;
  border-radius: 5px;
  color: #26a560;
  background: #e9f3ef;
`

const ScrollThumb = styled.span`
  position: absolute;
  right: 3px;
  top: 75px;
  width: 7px;
  height: 700px;
  border-radius: 4px;
  background: #e3e6e8;
`

const Overlay = styled.div`
  position: fixed;
  inset: 0;
  z-index: 10;
  background: rgba(0, 0, 0, 0.5);
  display: flex;
  justify-content: center;
  align-items: flex-start;
  padding: 36px 0 0 6px;
`

const Modal = styled.div`
  width: 1098px;
  height: 1388px;
  background: #fff;
  display: flex;
  flex-direction: column;
  box-shadow: 0 1px 3px rgba(0, 0, 0, 0.4);
`

const ModalHead = styled.div`
  position: relative;
  flex: 0 0 173px;
  padding: 60px 0 0 29px;
  background: #181b2a;
  clip-path: polygon(0 0, 100% 0, 100% 80%, 0 100%);
  color: #fff;
`

const ModalTitle = styled.h2`
  margin: 0;
  font-size: 37px;
  line-height: 50px;
  font-weight: 300;
`

const CloseMark = styled.span`
  position: absolute;
  top: 17px;
  right: 21px;
  font-size: 22px;
  font-weight: 700;
`

const ModalBody = styled.div`
  flex: 1;
  padding: 38px 30px 0 29px;
`

const FormRow = styled.div`
  display: flex;
  margin-bottom: 20px;
`

const FormLabel = styled.label`
  flex: 0 0 360px;
  padding-top: 11px;
  font-size: 19.7px;
  line-height: 25px;
  font-weight: 600;
  color: #212529;
`

const SelectBox = styled.div`
  flex: 1;
  height: 57px;
  display: flex;
  align-items: center;
  gap: 6px;
  padding-left: 21px;
  border: 1.5px solid #6c757d;
  border-radius: 6px;
  font-size: 23px;
  color: #6c757d;
`

const DownCaret = styled.span`
  width: 0;
  height: 0;
  margin-left: 1px;
  border-left: 7px solid transparent;
  border-right: 7px solid transparent;
  border-top: 8px solid #6c757d;
`

const Segmented = styled.div`
  height: 57px;
  display: flex;
  border: 1.5px solid #6c757d;
  border-radius: 6px;
  font-size: 23px;
  color: #6c757d;
`

const Segment = styled.div`
  display: flex;
  align-items: center;
  gap: 8px;
  padding: 0 20px 0 21px;

  & + & {
    border-left: 1.5px solid #6c757d;
    padding-right: 22px;
  }
`

const Radio = styled.span<{ $on?: boolean }>`
  flex: none;
  width: 19px;
  height: 19px;
  border-radius: 50%;
  background: ${({ $on }) => ($on ? '#fff' : '#dee4e8')};
  border: ${({ $on }) => ($on ? '6px solid #3d85fb' : '0')};
`

const Panel = styled.div`
  background: #f8f9fa;
  border: 1.5px solid #e6eaed;
`

const PanelTop = styled.div`
  padding: 32px 29px 50px;
  border-bottom: 3px solid #e2e7ea;
`

const PanelLabel = styled.div`
  margin-bottom: 11px;
  font-size: 19.7px;
  line-height: 25px;
  font-weight: 600;
  color: #212529;
`

const LanguageLabel = styled(PanelLabel)`
  margin-bottom: 12px;
`

const ChipWrap = styled.div`
  display: flex;
  flex-wrap: wrap;
  gap: 6px;
  margin-bottom: 22px;
`

const LocationWrap = styled(ChipWrap)`
  margin-bottom: 24px;
`

const ChipBox = styled.div`
  min-height: 45px;
  display: flex;
  align-items: center;
  gap: 10px;
  padding: 0 15px;
  border: 1.5px solid #868e96;
  border-radius: 6px;
  font-size: 19px;
  color: #6c757d;
  white-space: nowrap;
`

const NewTag = styled.span`
  height: 31px;
  margin: 7px 0 7px 5px;
  padding: 0 12px;
  display: flex;
  align-items: center;
  border-radius: 16px;
  background: #46c88f;
  color: #fff;
  font-size: 15px;
  font-weight: 700;
`

const LanguageSelect = styled.div`
  height: 44px;
  display: flex;
  align-items: center;
  justify-content: space-between;
  padding: 0 14px 0 15px;
  border: 1.5px solid #dee2e6;
  border-radius: 5px;
  background: #fff;
  font-size: 19px;
  color: #495057;
`

const UpDown = styled.svg`
  width: 12px;
  height: 18px;
  fill: #495057;
`

const PanelBottom = styled.div`
  padding: 31px 29px 26px;
`

const BusinessLabel = styled.div`
  display: flex;
  align-items: center;
  gap: 6px;
  font-size: 19.7px;
  line-height: 25px;
  font-weight: 600;
  color: #212529;
`

const HelpDot = styled.span`
  width: 19px;
  height: 19px;
  display: flex;
  align-items: center;
  justify-content: center;
  border: 1.3px solid #868e96;
  border-radius: 50%;
  font-size: 13px;
  font-weight: 400;
  color: #868e96;
`

const TagRow = styled.div`
  display: flex;
  gap: 5px;
  margin: 13px 0 19px;
`

const Tag = styled.span`
  height: 29px;
  padding: 0 6px;
  display: flex;
  align-items: center;
  border-radius: 5px;
  background: #6c757d;
  color: #fff;
  font-size: 14.4px;
  font-weight: 700;
  white-space: nowrap;
`

const TextArea = styled.textarea`
  display: block;
  width: 100%;
  height: 74px;
  padding: 9px 15px;
  border: 1.5px solid #dee2e6;
  border-radius: 5px;
  background: #fff;
  font-family: inherit;
  font-size: 18.6px;
  outline: 0;

  &::placeholder {
    color: #6c757d;
  }
`

const Hint = styled.div`
  margin-top: 8px;
  font-size: 15px;
  line-height: 20px;
  color: #6c757d;
`

const ModalFoot = styled.div`
  flex: 0 0 85px;
  display: flex;
  align-items: flex-start;
  justify-content: flex-end;
  padding: 19px 18px 0 0;
  background: #f8f9fa;
  border-top: 1.5px solid #d9dcdf;
`

const SubmitButton = styled.button`
  width: 207px;
  height: 45px;
  border: 0;
  border-radius: 5px;
  background: #3d85fb;
  color: #fff;
  font: inherit;
  font-size: 19.3px;
`

const Annotation = styled.svg`
  position: absolute;
  left: 0;
  top: 0;
  width: 3826px;
  height: 1629px;
  pointer-events: none;
`
